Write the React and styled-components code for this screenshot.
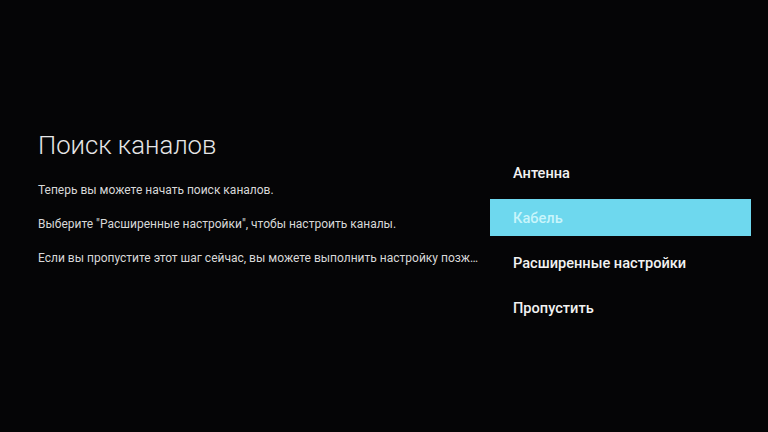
import React from 'react';
import styled, { createGlobalStyle } from 'styled-components';

const GlobalStyle = createGlobalStyle`
    html, body {
        margin: 0;
        padding: 0;
        background: #050506;
    }
    body {
        font-family: Roboto, "Noto Sans", sans-serif;
    }
`;

const Screen = styled.div`
    width: 768px;
    height: 432px;
    display: flex;
    align-items: flex-start;
    justify-content: space-between;
    background: #050506;
    overflow: hidden;
`;

const Intro = styled.div`
    padding: 128px 0 0 38px;
    display: flex;
    flex-direction: column;
`;

const Title = styled.h1`
    margin: 0 0 20px;
    font-size: 25.7px;
    font-weight: 300;
    line-height: 34px;
    color: #e6e6e6;
`;

const Para = styled.p`
    margin: 0 0 17px;
    font-size: 12px;
    line-height: 17px;
    color: #d8d8d8;
    white-space: nowrap;
`;

const Menu = styled.ul`
    list-style: none;
    margin: 0 17px 0 0;
    padding: 154px 0 0;
    width: 261px;
    display: flex;
    flex-direction: column;
    gap: 8px;
`;

const Item = styled.li`
    height: 37px;
    display: flex;
    align-items: center;
    padding-left: 23px;
    font-size: 14.6px;
    font-weight: 500;
    color: ${(p) => (p.$active ? '#c9f5fb' : '#f2f2f2')};
    background: ${(p) => (p.$active ? '#6ed8ee' : 'transparent')};
`;

const options = ['Антенна', 'Кабель', 'Расширенные настройки', 'Пропустить'];

const App = () => {
    return (
        <Screen>
            <GlobalStyle />
            <Intro>
                <Title>Поиск каналов</Title>
                <Para>Теперь вы можете начать поиск каналов.</Para>
                <Para>Выберите "Расширенные настройки", чтобы настроить каналы.</Para>
                <Para>Если вы пропустите этот шаг сейчас, вы можете выполнить настройку позж…</Para>
            </Intro>
            <Menu>
                {options.map((o, i) => (
                    <Item key={o} $active={i === 1}>
                        {o}
                    </Item>
                ))}
            </Menu>
        </Screen>
    );
};

export default App;
